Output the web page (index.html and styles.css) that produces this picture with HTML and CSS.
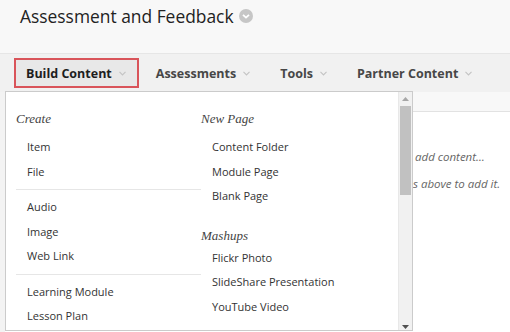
FILE: index.html
```html
<!DOCTYPE html>
<html lang="en">
<head>
  <meta charset="UTF-8">
  <title>Assessment and Feedback</title>
  <link rel="stylesheet" href="styles.css">
</head>
<body>
  <header class="page-head">
    <h1>Assessment and Feedback
      <span class="title-menu">
        <svg width="14" height="14" viewBox="0 0 14 14"><circle cx="7" cy="7" r="7" fill="#c6c6c6"/><polyline points="4,5.8 7,8.6 10,5.8" fill="none" stroke="#fff" stroke-width="1.8"/></svg>
      </span>
    </h1>
  </header>

  <nav class="action-bar">
    <button class="action active">Build Content <svg class="chev" width="7" height="5" viewBox="0 0 7 5"><polyline points="0.5,0.8 3.5,3.8 6.5,0.8" fill="none" stroke="#c4c4c4" stroke-width="1.2"/></svg></button>
    <button class="action">Assessments <svg class="chev" width="7" height="5" viewBox="0 0 7 5"><polyline points="0.5,0.8 3.5,3.8 6.5,0.8" fill="none" stroke="#c4c4c4" stroke-width="1.2"/></svg></button>
    <button class="action">Tools <svg class="chev" width="7" height="5" viewBox="0 0 7 5"><polyline points="0.5,0.8 3.5,3.8 6.5,0.8" fill="none" stroke="#c4c4c4" stroke-width="1.2"/></svg></button>
    <button class="action">Partner Content <svg class="chev" width="7" height="5" viewBox="0 0 7 5"><polyline points="0.5,0.8 3.5,3.8 6.5,0.8" fill="none" stroke="#c4c4c4" stroke-width="1.2"/></svg></button>
  </nav>

  <main class="content">
    <div class="content-strip"></div>
    <div class="empty-wrap">
      <p class="empty line-1">add content…</p>
      <p class="empty line-2">s above to add it.</p>
    </div>

    <div class="dropdown">
      <div class="menu">
        <div class="menu-col col-left">
          <h4>Create</h4>
          <a class="item">Item</a>
          <a class="item">File</a>
          <hr>
          <a class="item">Audio</a>
          <a class="item">Image</a>
          <a class="item">Web Link</a>
          <hr>
          <a class="item">Learning Module</a>
          <a class="item">Lesson Plan</a>
        </div>
        <div class="menu-col col-right">
          <h4>New Page</h4>
          <a class="item">Content Folder</a>
          <a class="item">Module Page</a>
          <a class="item">Blank Page</a>
          <h4 class="second">Mashups</h4>
          <a class="item">Flickr Photo</a>
          <a class="item">SlideShare Presentation</a>
          <a class="item">YouTube Video</a>
        </div>
      </div>
      <div class="scrollbar">
        <div class="sb-btn up"><svg width="7" height="4" viewBox="0 0 7 4"><polygon points="0,4 3.5,0 7,4" fill="#a6a6a6"/></svg></div>
        <div class="sb-track"><div class="sb-thumb"></div></div>
        <div class="sb-btn down"><svg width="7" height="4" viewBox="0 0 7 4"><polygon points="0,0 3.5,4 7,0" fill="#505050"/></svg></div>
      </div>
    </div>
  </main>
</body>
</html>
```

FILE: styles.css
```css
body {
  margin: 0;
  font-family: 'Open Sans', Arial, sans-serif;
  background-color: #f8f8f8;
  color: #333;
  overflow: hidden;
}
.page-head {
  height: 54px;
  border-bottom: 1px solid #e6e6e6;
  box-sizing: border-box;
}
h1 {
  margin: 0;
  padding: 4px 0 0 20px;
  font-size: 17.4px;
  font-weight: 400;
  line-height: 24px;
  color: #222;
  display: flex;
  align-items: center;
}
.title-menu {
  display: inline-flex;
  margin-left: 5px;
}
.action-bar {
  height: 38px;
  background-color: #f1f1f1;
  display: flex;
  align-items: center;
  padding-left: 14px;
  gap: 5px;
}
.action {
  font-family: inherit;
  font-size: 12.5px;
  font-weight: 700;
  color: #474747;
  white-space: nowrap;
  background: none;
  border: 2px solid transparent;
  height: 30px;
  padding: 0 11px 0 10px;
  display: flex;
  align-items: center;
  cursor: pointer;
}
.action.active {
  color: #1e1e1e;
  background-color: #e8e8e8;
  border-color: #d9545a;
}
.chev {
  margin-left: 7px;
  margin-top: 1px;
}
.content {
  position: relative;
  height: 240px;
  background-color: #fff;
  border-left: 5px solid #f3f3f3;
}
.content-strip {
  height: 19px;
  background-color: #f8f8f8;
  border-bottom: 1px solid #e2e2e2;
}
.empty-wrap {
  margin-left: 408px;
  overflow: hidden;
  padding-top: 31px;
}
.empty {
  margin: 0;
  font-size: 11.5px;
  font-style: italic;
  line-height: 27px;
  color: #666;
  white-space: nowrap;
}
.line-1 {
  padding-left: 2px;
}
.line-2 {
  padding-left: 0;
}
.dropdown {
  position: absolute;
  left: 0;
  top: -1px;
  width: 408px;
  height: 240px;
  box-sizing: border-box;
  background-color: #fff;
  border: 1px solid #cbcbcb;
  display: flex;
}
.menu {
  flex: 1;
  display: flex;
  padding: 17px 0 0 10px;
  overflow: hidden;
}
.menu-col {
  display: flex;
  flex-direction: column;
}
.col-left {
  width: 185px;
}
.col-right {
  flex: 1;
}
h4 {
  margin: 0 0 6px;
  font-family: 'Liberation Serif', 'Times New Roman', serif;
  font-style: italic;
  font-weight: 400;
  font-size: 13px;
  line-height: 20px;
  color: #444;
}
h4.second {
  margin: 17px 0 0;
}
.item {
  padding-left: 11px;
  font-size: 11px;
  line-height: 24.5px;
  color: #333;
}
hr {
  width: 100%;
  margin: 5px 0;
  border: none;
  border-top: 1px solid #e6e6e6;
}
.scrollbar {
  width: 13px;
  background-color: #f1f1f1;
  border-left: 1px solid #e8e8e8;
  display: flex;
  flex-direction: column;
}
.sb-btn {
  height: 13px;
  display: flex;
  justify-content: center;
  align-items: center;
}
.sb-btn.down {
  align-items: flex-end;
  padding-bottom: 1px;
}
.sb-track {
  flex: 1;
  padding: 1px 1px 0;
}
.sb-thumb {
  height: 89px;
  background-color: #c1c1c1;
}
```
